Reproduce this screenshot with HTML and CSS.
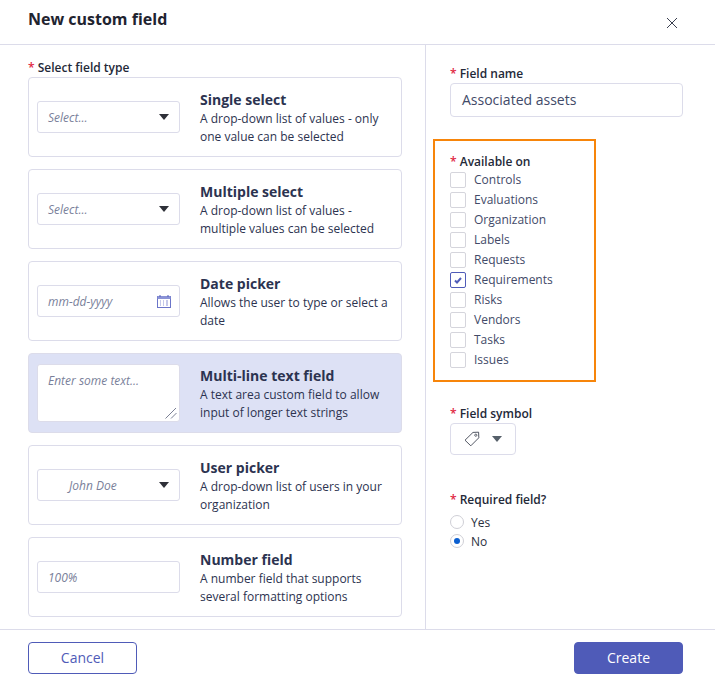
FILE: index.html
```html
<!DOCTYPE html>
<html lang="en">
<head>
<meta charset="utf-8">
<title>New custom field</title>
<link rel="stylesheet" href="styles.css">
</head>
<body>
<div class="modal">
  <header class="header">
    <h1 class="title">New custom field</h1>
    <svg class="close" width="12" height="12" viewBox="0 0 12 12"><path d="M1 1l10 10M11 1L1 11" stroke="#3a3f4f" stroke-width="1" fill="none"/></svg>
  </header>
  <main class="body">
    <section class="left">
      <div class="label label-left"><span class="req">*</span> Select field type</div>
      <div class="cards">
        <div class="card">
          <div class="control"><span class="ph">Select...</span><span class="caret"></span></div>
          <div class="info"><div class="name">Single select</div><div class="desc">A drop-down list of values - only one value can be selected</div></div>
        </div>
        <div class="card">
          <div class="control"><span class="ph">Select...</span><span class="caret"></span></div>
          <div class="info"><div class="name">Multiple select</div><div class="desc">A drop-down list of values - multiple values can be selected</div></div>
        </div>
        <div class="card">
          <div class="control"><span class="ph">mm-dd-yyyy</span>
            <svg class="cal" width="15" height="13" viewBox="0 0 15 13"><rect x="0.5" y="1.5" width="13" height="11" fill="#fff" stroke="#6b75c9"/><rect x="0.5" y="1" width="13" height="3" fill="#8b93d6"/><path d="M3 0v2M11 0v2" stroke="#4f5bb8"/><path d="M3 6h1M6 6h1M9 6h2M3 8h1M6 8h1M9 8h2M3 10h1M6 10h1M9 10h2" stroke="#8b93d6"/></svg>
          </div>
          <div class="info"><div class="name">Date picker</div><div class="desc">Allows the user to type or select a date</div></div>
        </div>
        <div class="card selected">
          <div class="control area"><span class="ph">Enter some text...</span>
            <svg class="grip" width="12" height="12" viewBox="0 0 12 12"><path d="M0.5 11.5L11 1M6 11.5L11.5 6" stroke="#7b8094" stroke-width="1" fill="none"/></svg>
          </div>
          <div class="info"><div class="name">Multi-line text field</div><div class="desc">A text area custom field to allow input of longer text strings</div></div>
        </div>
        <div class="card">
          <div class="control"><span class="ph ph-center">John Doe</span><span class="caret"></span></div>
          <div class="info"><div class="name">User picker</div><div class="desc">A drop-down list of users in your organization</div></div>
        </div>
        <div class="card">
          <div class="control"><span class="ph">100%</span></div>
          <div class="info"><div class="name">Number field</div><div class="desc">A number field that supports several formatting options</div></div>
        </div>
      </div>
    </section>
    <aside class="right">
      <div class="label label-name"><span class="req">*</span> Field name</div>
      <div class="text-input">Associated assets</div>
      <div class="highlight">
        <div class="label"><span class="req">*</span> Available on</div>
        <ul class="checks">
          <li class="check"><span class="box"></span>Controls</li>
          <li class="check"><span class="box"></span>Evaluations</li>
          <li class="check"><span class="box"></span>Organization</li>
          <li class="check"><span class="box"></span>Labels</li>
          <li class="check"><span class="box"></span>Requests</li>
          <li class="check"><span class="box on"><svg width="10" height="8" viewBox="0 0 10 8"><path d="M2 4.5L4 6.5L8 2" stroke="#4f5bb8" stroke-width="2" fill="none"/></svg></span>Requirements</li>
          <li class="check"><span class="box"></span>Risks</li>
          <li class="check"><span class="box"></span>Vendors</li>
          <li class="check"><span class="box"></span>Tasks</li>
          <li class="check"><span class="box"></span>Issues</li>
        </ul>
      </div>
      <div class="label label-symbol"><span class="req">*</span> Field symbol</div>
      <div class="symbol">
        <svg width="16" height="16" viewBox="0 0 16 16"><path d="M1 9.2L9 1.4L14.6 1.2L14.8 6.8L6.8 14.8Z" fill="none" stroke="#3f4552" stroke-width="0.9" stroke-linejoin="round"/><circle cx="11.8" cy="4.2" r="1.1" fill="none" stroke="#3f4552" stroke-width="0.8"/></svg>
        <span class="caret caret-grey"></span>
      </div>
      <div class="label label-required"><span class="req">*</span> Required field?</div>
      <div class="radio"><span class="dot"></span>Yes</div>
      <div class="radio"><span class="dot on"></span>No</div>
    </aside>
  </main>
  <footer class="footer">
    <button class="btn btn-outline">Cancel</button>
    <button class="btn btn-fill">Create</button>
  </footer>
</div>
</body>
</html>
```
FILE: styles.css
```css
* { box-sizing: border-box; }
html, body { margin: 0; padding: 0; background: #fff; }
body { font-family: "Open Sans", sans-serif; color: #2c3350; overflow: hidden; }
.modal { width: 715px; height: 684px; display: flex; flex-direction: column; }

.header { height: 45px; flex: none; border-bottom: 1px solid #dcdcea; display: flex; align-items: flex-start; justify-content: space-between; padding: 0 37px 0 28px; }
.title { margin: 0; font-size: 16px; line-height: 38px; font-weight: 700; color: #1f2430; }
.close { margin-top: 17px; }

.body { flex: 1; display: flex; min-height: 0; }
.left { width: 426px; flex: none; border-right: 1px solid #dcdcea; padding: 15px 23px 0 28px; }
.right { flex: 1; padding: 20px 32px 0 24px; }

.label { font-size: 12px; line-height: 16px; font-weight: 600; color: #242938; }
.req { color: #e0243f; }
.label-left { height: 17px; }
.label-name { padding-top: 1px; height: 17px; }

.cards { display: flex; flex-direction: column; gap: 12px; }
.card { height: 80px; border: 1px solid #dcdcea; border-radius: 4px; display: flex; align-items: center; padding: 0 8px; background: #fff; }
.card.selected { background: #dde1f5; }
.control { width: 143px; height: 32px; flex: none; border: 1px solid #dcdcea; border-radius: 3px; background: #fff; display: flex; align-items: center; justify-content: space-between; padding: 0 10px; position: relative; }
.control.area { height: 58px; align-items: flex-start; padding-top: 6px; }
.ph { margin-top: 2px; font-size: 12px; line-height: 16px; font-style: italic; color: #7a7f9a; }
.ph-center { margin-left: 21px; }
.caret { width: 0; height: 0; border-left: 5px solid transparent; border-right: 5px solid transparent; border-top: 6px solid #2e3038; }
.caret-grey { border-top-color: #56606a; }
.cal { margin-right: -3px; }
.grip { position: absolute; right: 2px; bottom: 2px; }

.info { margin-left: 20px; min-width: 0; width: 193px; padding-top: 2px; }
.name { font-size: 14px; line-height: 20px; font-weight: 700; color: #2c3350; }
.desc { font-size: 12px; line-height: 18px; color: #2c3350; }

.text-input { width: 233px; height: 34px; margin-top: 1px; border: 1px solid #dcdcea; border-radius: 4px; padding: 0 11px; font-size: 14px; line-height: 32px; color: #424a68; }

.highlight { width: 163px; height: 243px; margin: 22px 0 0 -17px; border: 2px solid #f7850a; padding: 13px 0 0 15px; }
.checks { list-style: none; margin: 0; padding: 0; }
.check { height: 20px; display: flex; align-items: flex-start; font-size: 12px; line-height: 20px; color: #424a68; }
.box { width: 16px; height: 16px; flex: none; margin: 2px 8px 0 0; border: 1px solid #d5d5dc; border-radius: 2px; display: flex; align-items: center; justify-content: center; background: #fff; }
.box.on { border-color: #4f5bb8; }

.label-symbol { margin-top: 24px; }
.symbol { width: 66px; height: 32px; margin-top: 1px; border: 1px solid #dcdcea; border-radius: 4px; display: flex; align-items: center; padding-left: 13px; gap: 12px; }
.label-required { margin-top: 37px; }
.radio { height: 19px; display: flex; align-items: center; font-size: 12px; font-weight: 400; color: #2a2f3d; }
.label-required + .radio { margin-top: 5px; }
.dot { width: 14px; height: 14px; flex: none; margin: 0 7px 1px 0; border: 1px solid #cfcfd6; border-radius: 50%; background: #fff; position: relative; }
.dot.on::after { content: ""; position: absolute; left: 3px; top: 3px; width: 6px; height: 6px; border-radius: 50%; background: #0b5fd0; }

.footer { height: 55px; flex: none; border-top: 1px solid #dcdcea; display: flex; justify-content: space-between; padding: 12px 32px 0 28px; }
.btn { width: 109px; height: 32px; border-radius: 4px; font-family: inherit; font-size: 14px; padding: 0 0 2px; }
.btn-outline { background: #fff; border: 1px solid #4f5bb8; color: #4f5bb8; }
.btn-fill { background: #4f5bb8; border: 1px solid #4f5bb8; color: #fff; font-weight: 500; }
```
